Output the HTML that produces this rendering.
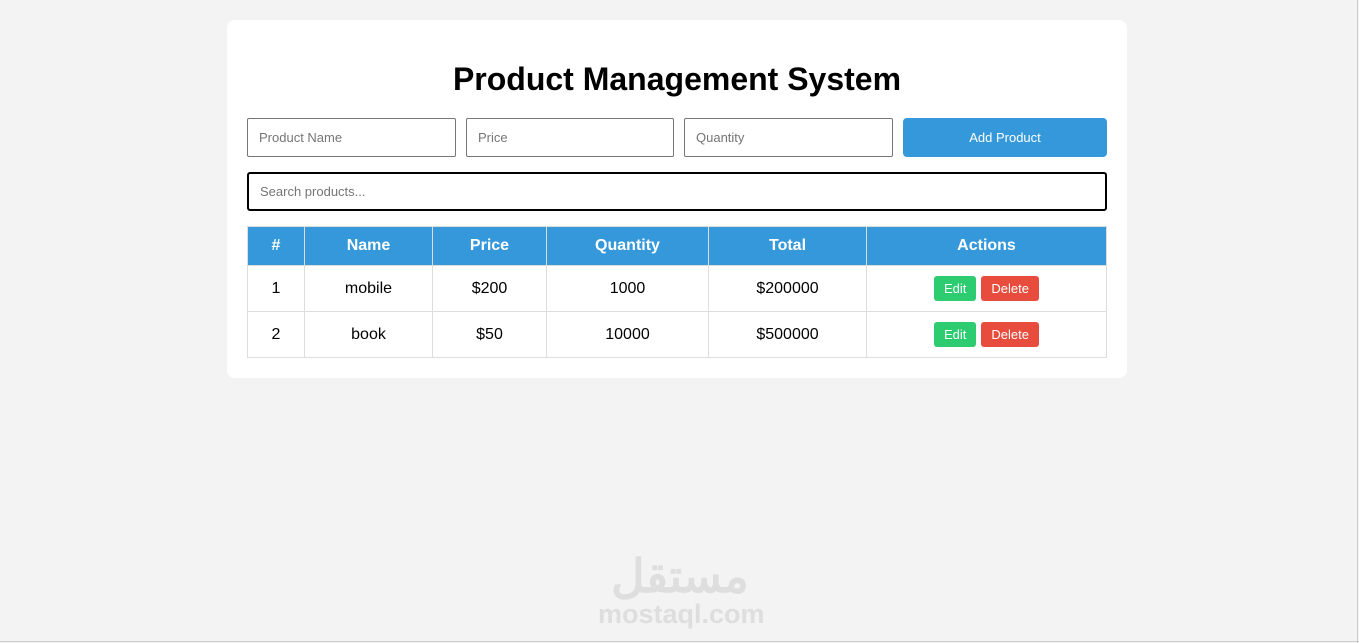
<!DOCTYPE html>
<html><head><meta charset="utf-8"><style>
html,body{margin:0;padding:0}
body{width:1359px;height:643px;background:#f3f3f3;font-family:"Liberation Sans",Arial,sans-serif;position:relative;overflow:hidden}
.card{position:absolute;left:227px;top:20px;width:900px;height:358px;background:#fff;border-radius:8px}
h1{position:absolute;left:0;right:0;top:39px;margin:0;text-align:center;font-size:32px;font-weight:bold;line-height:40px;color:#000}
.in{position:absolute;top:98px;height:37px;border:1px solid #767676;border-radius:2px;box-sizing:content-box;font-size:13px;color:#757575;line-height:37px;padding-left:11px}
.btn{position:absolute;left:676px;top:98px;width:204px;height:39px;background:#3498db;border-radius:4px;color:#fff;font-size:13px;line-height:39px;text-align:center}
.search{position:absolute;left:20px;top:152px;width:845px;height:35px;border:2px solid #000;border-radius:3px;font-size:13px;color:#757575;line-height:35px;padding-left:11px}
table{position:absolute;left:20px;top:206px;width:860px;border-collapse:collapse}
th,td{border:1px solid #ddd;text-align:center;padding:0}
th{background:#3498db;color:#fff;font-size:16px;height:38px}
td{height:45px;font-size:16px;color:#000}
.b{display:inline-block;color:#fff;font-size:13px;height:25px;line-height:25px;border-radius:3px;padding:0 10px;vertical-align:middle}
.e{background:#2ecc71}.d{background:#e74c3c;margin-left:5px}
.wm{position:absolute;left:598px;top:599px;font-size:27px;font-weight:bold;color:#dedede}
.wa{position:absolute;left:598px;top:545px;width:164px;text-align:center;font-size:46px;font-weight:bold;color:#dedede;font-family:"Noto Sans CJK SC",sans-serif;line-height:56px}
</style></head><body>
<div class="card">
<h1>Product Management System</h1>
<div class="in" style="left:20px;width:196px">Product Name</div>
<div class="in" style="left:239px;width:195px">Price</div>
<div class="in" style="left:457px;width:196px">Quantity</div>
<div class="btn">Add Product</div>
<div class="search">Search products...</div>
<table>
<tr><th style="width:56px">#</th><th style="width:127px">Name</th><th style="width:113px">Price</th><th style="width:161px">Quantity</th><th style="width:157px">Total</th><th>Actions</th></tr>
<tr><td>1</td><td>mobile</td><td>$200</td><td>1000</td><td>$200000</td><td><span class="b e">Edit</span><span class="b d">Delete</span></td></tr>
<tr><td>2</td><td>book</td><td>$50</td><td>10000</td><td>$500000</td><td><span class="b e">Edit</span><span class="b d">Delete</span></td></tr>
</table>
</div>
<div class="wa">مستقل</div>
<div class="wm">mostaql.com</div>
<div style="position:absolute;right:1px;top:0;width:1px;height:643px;background:#ccc"></div>
<div style="position:absolute;left:0;bottom:1px;width:1359px;height:1px;background:#ccc"></div>
</body></html>
